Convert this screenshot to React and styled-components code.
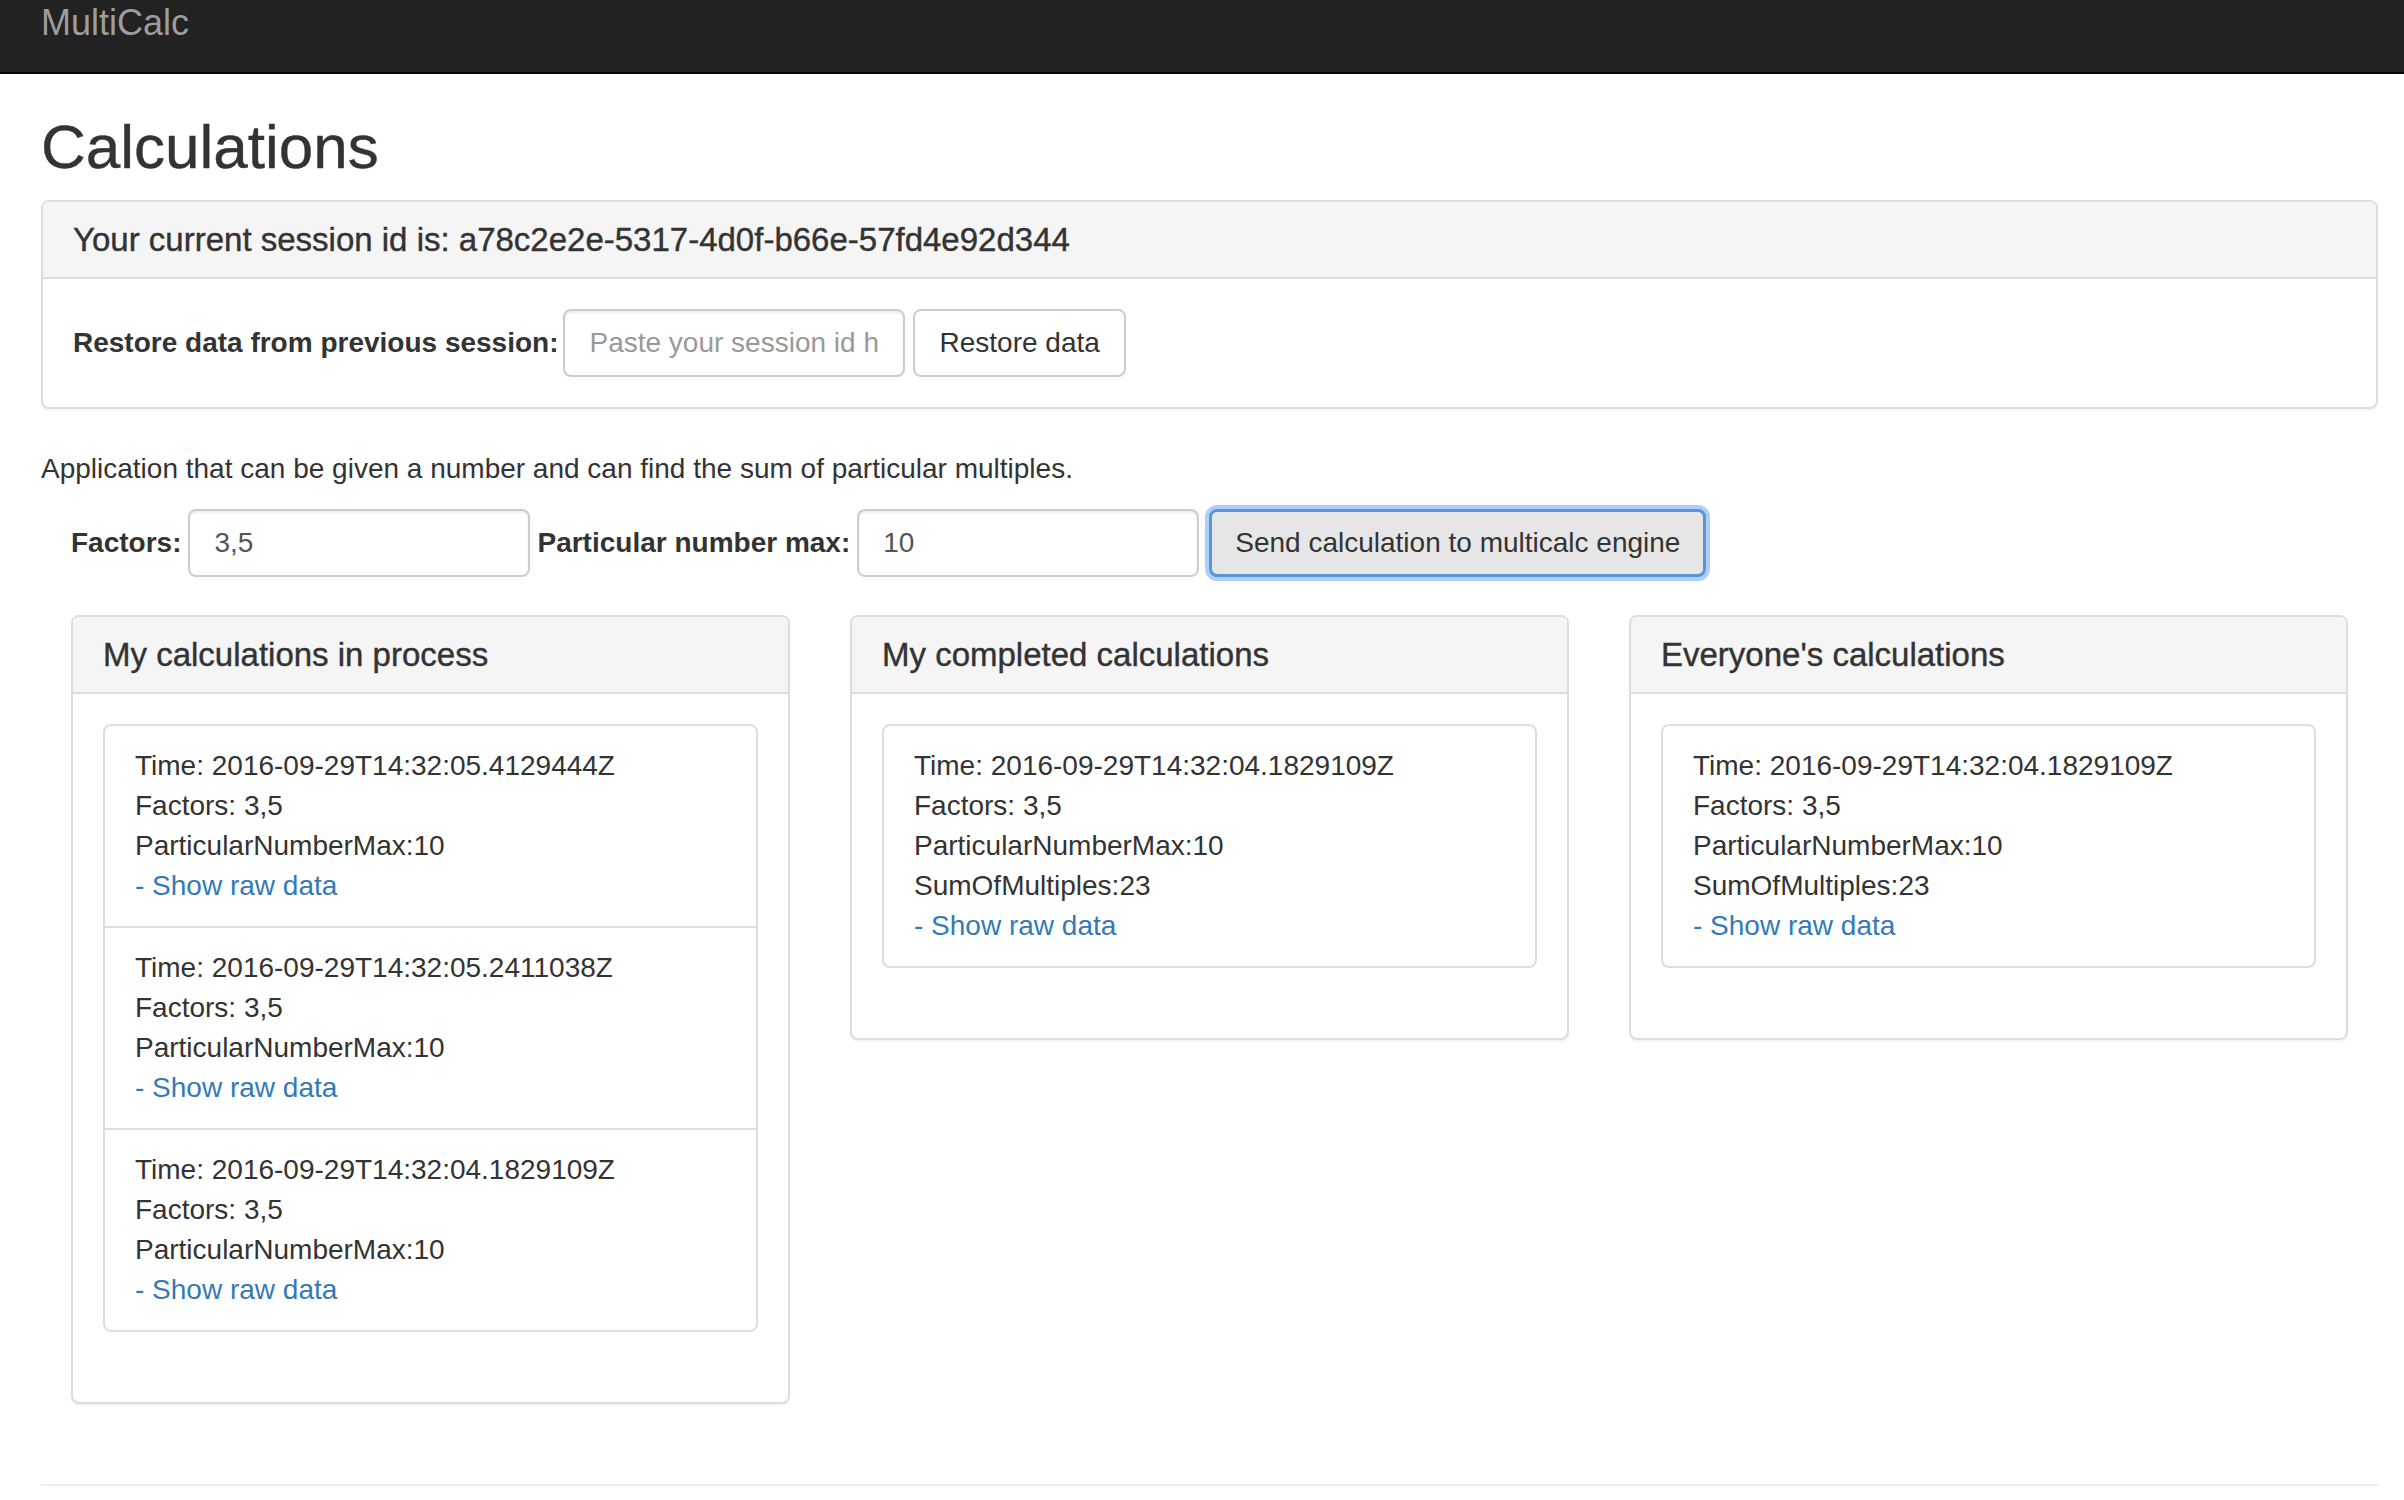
import React from 'react';
import styled, { createGlobalStyle } from 'styled-components';

const GlobalStyle = createGlobalStyle`
  * {
    box-sizing: border-box;
  }

  body {
    margin: 0;
    background: #fff;
    font-family: "Liberation Sans", Arial, sans-serif;
    font-size: 28px;
    line-height: 40px;
    color: #333;
  }
`;

const Navbar = styled.nav`
  height: 74px;
  background: #222;
  border-bottom: 2px solid #080808;
`;

const Brand = styled.a`
  display: block;
  padding: 3px 0 0 41px;
  font-size: 36px;
  line-height: 40px;
  color: #9d9d9d;
  text-decoration: none;
`;

const Container = styled.main`
  padding: 0 26px 0 41px;
`;

const Title = styled.h2`
  margin: 40px 0 20px;
  font-size: 62px;
  line-height: 66px;
  font-weight: 500;
  color: #333;
  -webkit-text-stroke: 0.4px #333;
`;

const Panel = styled.section`
  background: #fff;
  border: 2px solid #ddd;
  border-radius: 8px;
  margin-bottom: 40px;
  box-shadow: 0 2px 2px rgba(0, 0, 0, 0.05);
`;

const PanelHeading = styled.div`
  padding: 20px 30px;
  background: #f5f5f5;
  border-bottom: 2px solid #ddd;
  border-radius: 6px 6px 0 0;
`;

const PanelTitle = styled.h3`
  margin: 0;
  font-size: 33px;
  line-height: 35px;
  font-weight: 500;
  color: #333;
  white-space: nowrap;
  -webkit-text-stroke: 0.4px #333;
`;

const PanelBody = styled.div`
  padding: 30px;
`;

const InlineForm = styled.form`
  display: flex;
  align-items: center;
  gap: ${p => (p.$indent ? '7px' : '5px')};
  padding-left: ${p => (p.$indent ? '30px' : '0')};
  margin-bottom: ${p => (p.$indent ? '38px' : '0')};
`;

const Label = styled.label`
  font-weight: 700;
  white-space: nowrap;
`;

const Input = styled.input`
  width: 342px;
  height: 68px;
  padding: 12px 24px;
  font-family: inherit;
  font-size: 28px;
  line-height: 40px;
  color: #555;
  background: #fff;
  border: 2px solid #ccc;
  border-radius: 8px;
  box-shadow: inset 0 2px 2px rgba(0, 0, 0, 0.075);
  outline: none;

  &::placeholder {
    color: #999;
  }
`;

const Button = styled.button`
  height: 68px;
  margin-left: ${p => (p.$focused ? '3px' : '3px')};
  padding: ${p => (p.$focused ? '11px 23px' : '12px 24px')};
  font-family: inherit;
  font-size: 28px;
  line-height: 40px;
  color: #333;
  white-space: nowrap;
  background: ${p => (p.$focused ? '#e6e6e6' : '#fff')};
  border: ${p => (p.$focused ? '3px solid #5a95d8' : '2px solid #ccc')};
  border-radius: 8px;
  box-shadow: ${p => (p.$focused ? '0 0 0 4px #abcff6' : 'none')};
  cursor: pointer;
`;

const Description = styled.p`
  margin: 0 0 20px;
`;

const Columns = styled.div`
  display: grid;
  grid-template-columns: repeat(3, 1fr);
`;

const Column = styled.div`
  padding: 0 30px;
`;

const List = styled.ul`
  margin: 0 0 40px;
  padding: 0;
  list-style: none;
`;

const Item = styled.li`
  padding: 20px 30px;
  border: 2px solid #ddd;
  margin-bottom: -2px;

  &:first-child {
    border-top-left-radius: 8px;
    border-top-right-radius: 8px;
  }

  &:last-child {
    margin-bottom: 0;
    border-bottom-left-radius: 8px;
    border-bottom-right-radius: 8px;
  }
`;

const Line = styled.div`
  white-space: nowrap;
`;

const RawLink = styled.a`
  color: #337ab7;
  text-decoration: none;
`;

const Rule = styled.hr`
  margin: 40px 0;
  border: 0;
  border-top: 2px solid #eee;
`;

const inProcess = [
  { time: '2016-09-29T14:32:05.4129444Z', factors: '3,5', max: 10 },
  { time: '2016-09-29T14:32:05.2411038Z', factors: '3,5', max: 10 },
  { time: '2016-09-29T14:32:04.1829109Z', factors: '3,5', max: 10 },
];

const completed = [
  { time: '2016-09-29T14:32:04.1829109Z', factors: '3,5', max: 10, sum: 23 },
];

const columns = [
  { title: 'My calculations in process', items: inProcess },
  { title: 'My completed calculations', items: completed },
  { title: "Everyone's calculations", items: completed },
];

function CalcItem({ calc }) {
  return (
    <Item>
      <Line>Time: {calc.time}</Line>
      <Line>Factors: {calc.factors}</Line>
      <Line>ParticularNumberMax:{calc.max}</Line>
      {calc.sum !== undefined && <Line>SumOfMultiples:{calc.sum}</Line>}
      <Line>
        <RawLink href="#">- Show raw data</RawLink>
      </Line>
    </Item>
  );
}

export default function App() {
  return (
    <>
      <GlobalStyle />
      <Navbar>
        <Brand href="#">MultiCalc</Brand>
      </Navbar>
      <Container>
        <Title>Calculations</Title>
        <Panel>
          <PanelHeading>
            <PanelTitle>Your current session id is: a78c2e2e-5317-4d0f-b66e-57fd4e92d344</PanelTitle>
          </PanelHeading>
          <PanelBody>
            <InlineForm onSubmit={e => e.preventDefault()}>
              <Label htmlFor="session">Restore data from previous session:</Label>
              <Input id="session" placeholder="Paste your session id here" />
              <Button type="button">Restore data</Button>
            </InlineForm>
          </PanelBody>
        </Panel>
        <Description>Application that can be given a number and can find the sum of particular multiples.</Description>
        <InlineForm $indent onSubmit={e => e.preventDefault()}>
          <Label htmlFor="factors">Factors:</Label>
          <Input id="factors" defaultValue="3,5" />
          <Label htmlFor="max">Particular number max:</Label>
          <Input id="max" defaultValue="10" />
          <Button type="button" $focused>Send calculation to multicalc engine</Button>
        </InlineForm>
        <Columns>
          {columns.map(col => (
            <Column key={col.title}>
              <Panel>
                <PanelHeading>
                  <PanelTitle>{col.title}</PanelTitle>
                </PanelHeading>
                <PanelBody>
                  <List>
                    {col.items.map(calc => (
                      <CalcItem key={calc.time} calc={calc} />
                    ))}
                  </List>
                </PanelBody>
              </Panel>
            </Column>
          ))}
        </Columns>
        <Rule />
      </Container>
    </>
  );
}
